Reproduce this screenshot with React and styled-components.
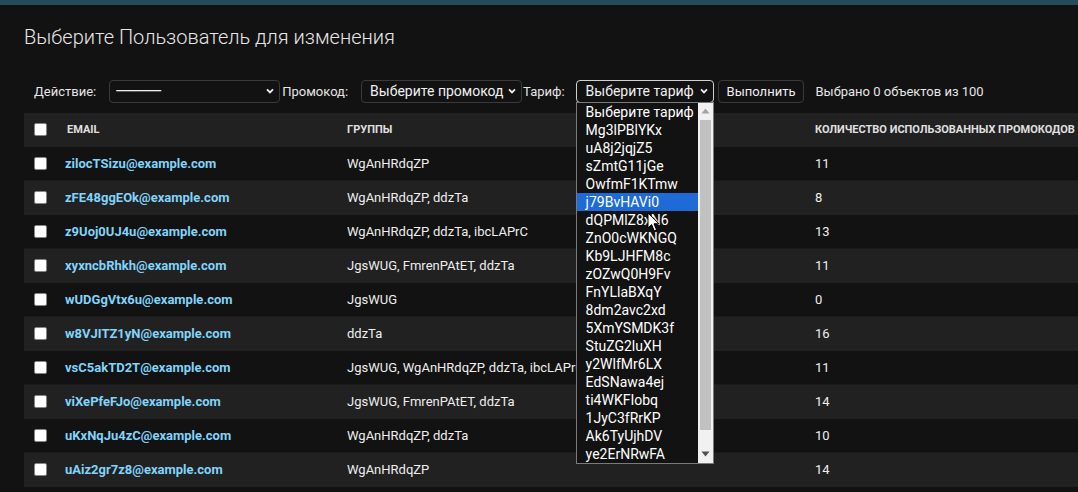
import styled, { createGlobalStyle } from 'styled-components';

const GlobalStyle = createGlobalStyle`
  html, body {
    margin: 0;
    padding: 0;
    background: #121212;
    overflow: hidden;
  }
  body {
    font-family: Roboto, "Noto Sans", "Liberation Sans", sans-serif;
    color: #eeeeee;
    font-size: 13px;
  }
`;

const tariffs = [
  'Выберите тариф', 'Mg3lPBlYKx', 'uA8j2jqjZ5', 'sZmtG11jGe', 'OwfmF1KTmw',
  'j79BvHAVi0', 'dQPMlZ8xN6', 'ZnO0cWKNGQ', 'Kb9LJHFM8c', 'zOZwQ0H9Fv',
  'FnYLlaBXqY', '8dm2avc2xd', '5XmYSMDK3f', 'StuZG2luXH', 'y2WlfMr6LX',
  'EdSNawa4ej', 'ti4WKFIobq', '1JyC3fRrKP', 'Ak6TyUjhDV', 'ye2ErNRwFA',
];

const users = [
  ['zilocTSizu@example.com', 'WgAnHRdqZP', 11],
  ['zFE48ggEOk@example.com', 'WgAnHRdqZP, ddzTa', 8],
  ['z9Uoj0UJ4u@example.com', 'WgAnHRdqZP, ddzTa, ibcLAPrC', 13],
  ['xyxncbRhkh@example.com', 'JgsWUG, FmrenPAtET, ddzTa', 11],
  ['wUDGgVtx6u@example.com', 'JgsWUG', 0],
  ['w8VJITZ1yN@example.com', 'ddzTa', 16],
  ['vsC5akTD2T@example.com', 'JgsWUG, WgAnHRdqZP, ddzTa, ibcLAPrC', 11],
  ['viXePfeFJo@example.com', 'JgsWUG, FmrenPAtET, ddzTa', 14],
  ['uKxNqJu4zC@example.com', 'WgAnHRdqZP, ddzTa', 10],
  ['uAiz2gr7z8@example.com', 'WgAnHRdqZP', 14],
];

const TopBar = styled.div`
  height: 5px;
  background: #264b5d;
`;

const Content = styled.main`
  padding: 20px 0 0 24px;
`;

const Title = styled.h1`
  margin: 0 0 30px;
  font-size: 20px;
  font-weight: 300;
  color: #e6e6e6;
  line-height: 24px;
`;

const Actions = styled.div`
  display: flex;
  align-items: center;
  height: 24px;
  padding-left: 10px;
  margin-bottom: 10px;
`;

const Label = styled.span`
  font-size: 13px;
  color: #e6e6e6;
  margin-right: ${p => p.$gap}px;
`;

const SelectWrap = styled.div`
  position: relative;
  margin-right: ${p => p.$gap || 0}px;
`;

const SelectBox = styled.div`
  box-sizing: border-box;
  display: flex;
  align-items: center;
  justify-content: space-between;
  width: ${p => p.$w}px;
  height: 23px;
  padding: 0 4px 0 ${p => p.$pad || 9}px;
  border: 1px solid ${p => (p.$focus ? '#d0d0d0' : '#3a3a3a')};
  border-radius: 4px;
  background: #121212;
  color: #f0f0f0;
  font-size: 14px;
  white-space: nowrap;
`;

const Dashes = styled.span`
  letter-spacing: -2px;
`;

const Button = styled.button`
  box-sizing: border-box;
  height: 23px;
  padding: 0 8px;
  margin: 0 11px 0 4px;
  border: 1px solid #3a3a3a;
  border-radius: 4px;
  background: #121212;
  color: #f0f0f0;
  font-family: inherit;
  font-size: 13px;
`;

const Counter = styled.span`
  font-size: 13px;
  color: #e6e6e6;
`;

const Listbox = styled.div`
  position: absolute;
  top: 22px;
  left: 0;
  z-index: 5;
  box-sizing: border-box;
  width: 138px;
  height: 362px;
  border: 1px solid #7a7a7a;
  background: #121212;
  display: flex;
`;

const Options = styled.div`
  flex: 1;
  overflow: hidden;
`;

const Option = styled.div`
  height: 18px;
  line-height: 18px;
  padding-left: 9px;
  font-size: 14px;
  color: #ffffff;
  white-space: nowrap;
  background: ${p => (p.$active ? '#1e6ad6' : 'transparent')};
`;

const Scrollbar = styled.div`
  width: 15px;
  background: #f1f1f1;
  display: flex;
  flex-direction: column;
  align-items: center;
`;

const Arrow = styled.div`
  height: 17px;
  display: flex;
  align-items: center;
  justify-content: center;
`;

const Thumb = styled.div`
  width: 11px;
  height: 310px;
  background: #c1c1c1;
`;

const Spacer = styled.div`
  flex: 1;
`;

const Cursor = styled.svg`
  position: absolute;
  left: 71px;
  top: 132px;
  z-index: 6;
`;

const Table = styled.div`
  width: 1200px;
`;

const Row = styled.div`
  display: grid;
  grid-template-columns: 33px 282px 468px 1fr;
  align-items: center;
  height: 34px;
  padding-bottom: ${p => (p.$head ? 0 : 1)}px;
  box-sizing: border-box;
  background: ${p => (p.$shade ? '#212121' : '#121212')};
  border-bottom: 1px solid ${p => (p.$shade ? '#212121' : '#1a1a1a')};
`;

const HeadCell = styled.div`
  padding-left: ${p => p.$pad || 8}px;
  font-size: 11px;
  font-weight: 700;
  text-transform: uppercase;
  color: #e0e0e0;
  white-space: nowrap;
`;

const Cell = styled.div`
  padding-left: 8px;
  font-size: 13px;
  color: #eeeeee;
  white-space: nowrap;
  overflow: ${p => (p.$clip ? 'hidden' : 'visible')};
`;

const CheckCell = styled.div`
  padding-left: 10px;
  display: flex;
  align-items: center;
`;

const Check = styled.span`
  box-sizing: border-box;
  width: 13px;
  height: 13px;
  border: 1px solid #858585;
  border-radius: 2px;
  background: #ffffff;
`;

const Email = styled.a`
  color: #81d4fa;
  font-weight: 700;
  text-decoration: none;
`;

function Chevron() {
  return (
    <svg width="10" height="10" viewBox="0 0 10 10">
      <path d="M2 3.4 L5 6.4 L8 3.4" fill="none" stroke="#f0f0f0" strokeWidth="1.8" />
    </svg>
  );
}

function Tri({ up }) {
  return (
    <svg width="9" height="6" viewBox="0 0 9 6">
      <path d={up ? 'M0.5 5.5 L4.5 0.5 L8.5 5.5 Z' : 'M0.5 0.5 L4.5 5.5 L8.5 0.5 Z'} fill={up ? '#a3a3a3' : '#505050'} />
    </svg>
  );
}

export default function App() {
  return (
    <>
      <GlobalStyle />
      <TopBar />
      <Content>
        <Title>Выберите Пользователь для изменения</Title>
        <Actions>
          <Label $gap={13}>Действие:</Label>
          <SelectWrap $gap={2}>
            <SelectBox $w={171} $pad={5}>
              <Dashes>—————</Dashes>
              <Chevron />
            </SelectBox>
          </SelectWrap>
          <Label $gap={13}>Промокод:</Label>
          <SelectWrap $gap={1}>
            <SelectBox $w={161} $pad={8}>
              <span>Выберите промокод</span>
              <Chevron />
            </SelectBox>
          </SelectWrap>
          <Label $gap={11}>Тариф:</Label>
          <SelectWrap>
            <SelectBox $w={138} $focus>
              <span>Выберите тариф</span>
              <Chevron />
            </SelectBox>
            <Listbox>
              <Options>
                {tariffs.map((t, i) => (
                  <Option key={t} $active={i === 5}>{t}</Option>
                ))}
              </Options>
              <Scrollbar>
                <Arrow><Tri up /></Arrow>
                <Thumb />
                <Spacer />
                <Arrow><Tri /></Arrow>
              </Scrollbar>
            </Listbox>
            <Cursor width="14" height="21" viewBox="0 0 14 21">
              <path d="M1 1 L1 16 L4.6 12.6 L7.2 18.8 L9.6 17.8 L7 11.8 L12 11.8 Z" fill="#ffffff" stroke="#000000" strokeWidth="1" strokeLinejoin="round" />
            </Cursor>
          </SelectWrap>
          <Button>Выполнить</Button>
          <Counter>Выбрано 0 объектов из 100</Counter>
        </Actions>
        <Table>
          <Row $shade $head>
            <CheckCell><Check /></CheckCell>
            <HeadCell $pad={10}>Email</HeadCell>
            <HeadCell>Группы</HeadCell>
            <HeadCell>Количество использованных промокодов</HeadCell>
          </Row>
          {users.map(([email, groups, n], i) => (
            <Row key={email} $shade={i % 2 === 1}>
              <CheckCell><Check /></CheckCell>
              <Cell><Email href="#">{email}</Email></Cell>
              <Cell $clip>{groups}</Cell>
              <Cell>{n}</Cell>
            </Row>
          ))}
        </Table>
      </Content>
    </>
  );
}
